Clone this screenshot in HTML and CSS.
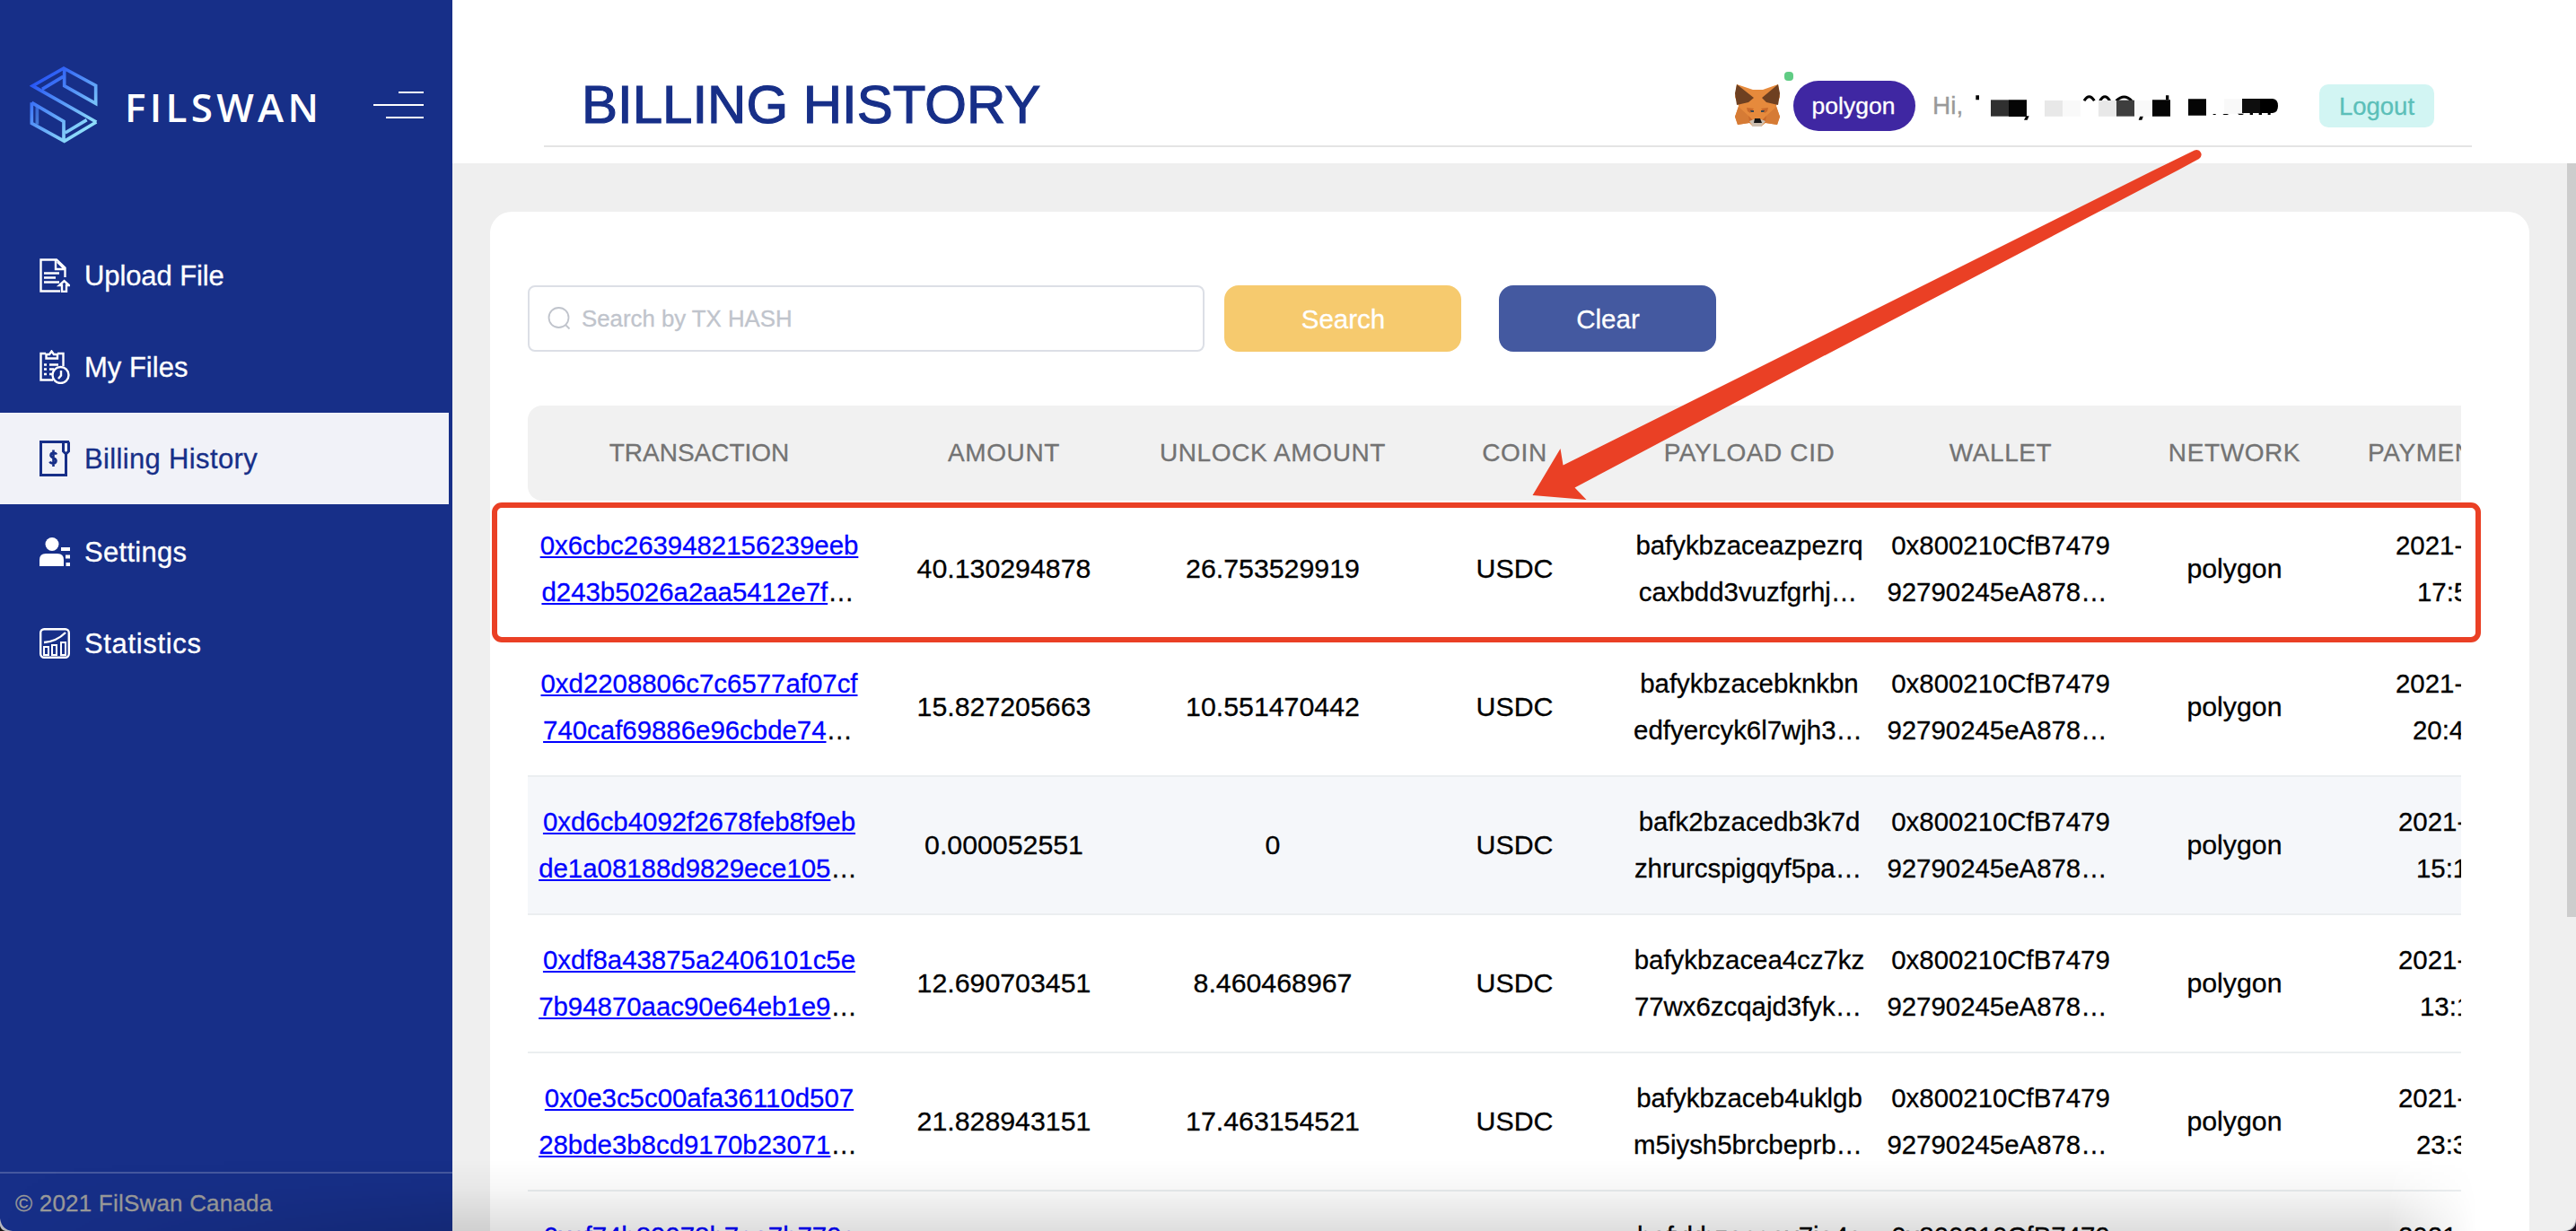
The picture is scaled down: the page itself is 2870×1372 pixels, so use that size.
FILE: index.html
```html
<!DOCTYPE html>
<html lang="en">
<head>
<meta charset="utf-8">
<title>FilSwan - Billing History</title>
<link rel="stylesheet" href="styles.css">
</head>
<body>
<div class="app">
  <aside class="sidebar">
    <div class="brand">
      <svg class="brand-mark" viewBox="99 99 231 261" width="77" height="87" fill="none">
        <defs>
          <linearGradient id="swan" gradientUnits="userSpaceOnUse" x1="130" y1="130" x2="290" y2="330">
            <stop offset="0" stop-color="#2350f5"/><stop offset=".5" stop-color="#5a9bf8"/><stop offset="1" stop-color="#96e6fb"/>
          </linearGradient>
        </defs>
        <g stroke="url(#swan)" stroke-width="11">
          <path d="M322 288 109 167 213 108 320 166V226L215 167V112M141 178 211 136"/>
          <path d="M106 223V292L215 352 322 288M106 223 213 286V350M218 324 290 281"/>
          <path d="M124 236V296" opacity=".7"/>
        </g>
      </svg>
      <span class="brand-name">FILSWAN</span>
      <span class="menu-toggle"><i></i><i></i><i></i></span>
    </div>
    <nav class="menu">
      <a class="menu-item upload">
        <svg width="34" height="38" viewBox="0 0 34 38" fill="none" stroke="#fff" stroke-width="2.400">
          <path d="M28.500 21V10.500L19 1.500H1.500V36.500H23"/><path d="M18 2V12H28M20 4 27 11"/>
          <path d="M5 16.500H22M5 21.500H18M5 26.500H22"/><path d="M25 37V30H22L27.500 25 33 30H30V37Z"/>
        </svg><span>Upload File</span>
      </a>
      <a class="menu-item">
        <svg width="34" height="38" viewBox="0 0 34 38" fill="none" stroke="#fff" stroke-width="2.400">
          <path d="M7 4H1.500V33.500H15M20 4H26.500V18"/><path d="M7.500 9.500V5H11L13.500 1.500 16 5H20V9.500Z"/>
          <path d="M5 16.500H8M11 16.500H21M5 21.500H8M11 21.500H16M5 27H8M11 27H14"/><circle cx="23.500" cy="28" r="9"/><path d="M24 23V28.500L21 32"/>
        </svg><span>My Files</span>
      </a>
      <a class="menu-item active">
        <svg width="34" height="40" viewBox="0 0 34 40" fill="none" stroke="#172f88" stroke-width="3">
          <path d="M33 1.500H1.500V38.500H29.500V14"/><path d="M26.500 2V12L29.500 15 32.500 12V1.500"/>
          <path stroke-width="2.600" d="M19 15.500C18 13.300 12.500 13 12.500 16.500 12.500 20 18.500 19 18.500 22.500 18.500 26.500 12.500 26 11.500 23.500M15.500 10.500V29"/>
        </svg><span>Billing History</span>
      </a>
      <a class="menu-item after-active">
        <svg width="34" height="32" viewBox="0 0 34 32" fill="#fff">
          <circle cx="14" cy="7.500" r="7.500"/><path d="M0 32V25Q0 18 7 18H20Q27 18 27 25V32ZM24 11H34V15H24ZM29 19.500H34V23.500H29ZM29.500 28H34V32H29.500Z"/>
        </svg><span>Settings</span>
      </a>
      <a class="menu-item stats">
        <svg width="34" height="34" viewBox="0 0 34 34" fill="none" stroke="#fff" stroke-width="2.400">
          <rect x="1.200" y="1.200" width="31.600" height="31.600" rx="4"/><path d="M5 16Q19 15 29 5"/>
          <path stroke-width="2" d="M5 30V21H10V30ZM14 30V19H19V30ZM24 30V16H29V30Z"/>
        </svg><span>Statistics</span>
      </a>
    </nav>
    <footer class="copyright">© 2021 FilSwan Canada</footer>
  </aside>

  <div class="main">
    <header class="topbar">
      <div class="topbar-inner">
        <h1>BILLING HISTORY</h1>
        <div class="account">
          <div class="wallet">
            <svg width="50" height="48" viewBox="0 0 50 48">
              <path fill="#e68a3c" d="M2 0 20 6H31L48 0 50 14 46 24 50 36 47 45 34 43 29 47H20L16 43 3 45 0 36 4 24 0 14Z"/>
              <path fill="#6e4021" d="M2 0 21 15 15 20 2 23 0 10ZM48 0 30 15 35 20 48 23 50 10Z"/>
              <path fill="#d67b35" d="M0 36 4 25 15 35 16 43 3 45ZM50 36 46 25 35 35 34 43 47 45Z"/>
              <path fill="#c8692b" d="M13 26 21 27 17 32 14 30ZM37 26 29 27 33 32 36 30ZM15 35 20 40 16 43ZM35 35 30 40 34 43Z"/>
              <path fill="#cdbfb0" d="M16 41 21 39H29L34 41 29 47H20Z"/>
              <path fill="#161616" d="M22 38H28L30 43H21Z"/><path fill="#3a4650" d="M17 29H21V31H18ZM29 29H33L32 31H29Z"/>
            </svg>
            <i class="online"></i>
          </div>
          <span class="chain">polygon</span>
          <span class="greeting">Hi,</span>
          <svg class="masked" width="340" height="40" viewBox="60 60 1020 120">
            <g fill="none" stroke="#000" stroke-width="9"><path d="M426 97Q443 69 460 97M479 97Q495 69 512 97M533 97Q560 71 585 97"/></g>
            <path d="M64 79H75V94H64ZM699 79H709V94H699ZM232 148H242L236 161H225ZM613 148H624L619 161H608Z"/>
            <g><path fill="#303030" d="M114 94H174V149H114Z"/><path fill="#050505" d="M174 94H234V150H174ZM654 94H714V149H654ZM774 91H834V146H774Z"/>
            <path fill="#e8e8e8" d="M294 96H354V149H294ZM474 96H534V149H474Z"/><path fill="#f9f9f9" d="M354 96H414V149H354ZM594 96H654V149H594ZM894 91H954V140H894Z"/>
            <path fill="#3e3e3e" d="M534 95H594V149H534Z"/><path fill="#0e0e0e" d="M954 90H1014V138H954Z"/><path d="M1014 90H1056Q1074 92 1074 114T1056 138H1014Z"/>
            <path d="M857 141H866V144H857ZM889 141H910L904 144H893ZM939 140H961L955 144H944ZM980 138H990V144H980ZM1010 138H1020V144H1010ZM1040 138H1049V144H1040Z"/></g>
          </svg>
          <button class="logout">Logout</button>
        </div>
      </div>
    </header>

    <section class="card">
      <div class="filters">
        <label class="search-box">
          <svg width="26" height="26" viewBox="0 0 26 26" fill="none" stroke="#c0c4cc" stroke-width="1.800"><circle cx="12.500" cy="12" r="11"/><path d="M20 20 24.500 24.500"/></svg>
          <span>Search by TX HASH</span>
        </label>
        <button class="btn btn-search">Search</button>
        <button class="btn btn-clear">Clear</button>
      </div>
      <div class="table-wrap">
        <table>
          <colgroup><col class="c-tx"><col class="c-amount"><col class="c-unlock"><col class="c-coin"><col class="c-cid"><col class="c-wallet"><col class="c-network"><col class="c-date"></colgroup>
          <thead>
            <tr><th>TRANSACTION</th><th>AMOUNT</th><th>UNLOCK AMOUNT</th><th>COIN</th><th>PAYLOAD CID</th><th>WALLET</th><th>NETWORK</th><th class="date-head">PAYMEN</th></tr>
          </thead>
          <tbody>
            <tr>
              <td><a>0x6cbc2639482156239eeb</a><br><a>d243b5026a2aa5412e7f</a><span class="more">…</span></td><td class="num">40.130294878</td><td class="num">26.753529919</td><td class="num">USDC</td>
              <td>bafykbzaceazpezrq<br>caxbdd3vuzfgrhj<span class="more">…</span></td><td class="addr">0x800210CfB7479<br>92790245eA878<span class="more">…</span></td><td class="num">polygon</td>
              <td class="date early"><div>2021-</div><div class="time">17:5</div></td>
            </tr>
            <tr>
              <td><a>0xd2208806c7c6577af07cf</a><br><a>740caf69886e96cbde74</a><span class="more">…</span></td><td class="num">15.827205663</td><td class="num">10.551470442</td><td class="num">USDC</td>
              <td>bafykbzacebknkbn<br>edfyercyk6l7wjh3<span class="more">…</span></td><td class="addr">0x800210CfB7479<br>92790245eA878<span class="more">…</span></td><td class="num">polygon</td>
              <td class="date early"><div>2021-</div><div class="time wide">20:4</div></td>
            </tr>
            <tr class="hover">
              <td><a>0xd6cb4092f2678feb8f9eb</a><br><a>de1a08188d9829ece105</a><span class="more">…</span></td><td class="num">0.000052551</td><td class="num">0</td><td class="num">USDC</td>
              <td>bafk2bzacedb3k7d<br>zhrurcspigqyf5pa<span class="more">…</span></td><td class="addr">0x800210CfB7479<br>92790245eA878<span class="more">…</span></td><td class="num">polygon</td>
              <td class="date"><div>2021-</div><div class="time">15:1</div></td>
            </tr>
            <tr>
              <td><a>0xdf8a43875a2406101c5e</a><br><a>7b94870aac90e64eb1e9</a><span class="more">…</span></td><td class="num">12.690703451</td><td class="num">8.460468967</td><td class="num">USDC</td>
              <td>bafykbzacea4cz7kz<br>77wx6zcqajd3fyk<span class="more">…</span></td><td class="addr">0x800210CfB7479<br>92790245eA878<span class="more">…</span></td><td class="num">polygon</td>
              <td class="date"><div>2021-</div><div class="time narrow">13:1</div></td>
            </tr>
            <tr>
              <td><a>0x0e3c5c00afa36110d507</a><br><a>28bde3b8cd9170b23071</a><span class="more">…</span></td><td class="num">21.828943151</td><td class="num">17.463154521</td><td class="num">USDC</td>
              <td>bafykbzaceb4uklgb<br>m5iysh5brcbeprb<span class="more">…</span></td><td class="addr">0x800210CfB7479<br>92790245eA878<span class="more">…</span></td><td class="num">polygon</td>
              <td class="date"><div>2021-</div><div class="time">23:3</div></td>
            </tr>
            <tr>
              <td><a>0xcf74b89978b7ea7b779c</a><br>&nbsp;</td><td></td><td></td><td></td>
              <td>bafykbzaceav7ja4s<br>&nbsp;</td><td>0x800210CfB7479<br>&nbsp;</td><td></td>
              <td class="date"><div>2021-</div><div>&nbsp;</div></td>
            </tr>
          </tbody>
        </table>
      </div>
    </section>
  </div>

  <i class="scrollbar"></i>
  <i class="bottom-shade"></i>
  <i class="row-marker"></i>
  <svg class="arrow" viewBox="1700 160 760 400" width="760" height="400">
    <path fill="#ea4025" d="M1707.500 552 1738.500 500 1741.500 518.500 1939 420 2399 190 2445 167.500Q2450 166 2452 170T2450 177L2426 190 1987.500 420 1754.500 543.500 1767.500 557Z"/>
  </svg>
  <svg class="corner corner-left" width="14" height="14" viewBox="0 0 14 14"><path fill="#b9b9c0" d="M0 0V14H14Q2 13 0 0Z"/><path fill="#111" d="M0 8V14H6Q1 13 0 8Z"/></svg>
  <svg class="corner corner-right" width="14" height="14" viewBox="0 0 14 14"><path fill="#b9b9c0" d="M14 0V14H0Q12 13 14 0Z"/><path fill="#1a0d20" d="M14 4V14H4Q13 12 14 4Z"/></svg>
</div>
</body>
</html>
```
FILE: styles.css
```css
* { box-sizing: border-box; }
body { margin: 0; font-family: "Liberation Sans", Arial, sans-serif; color: #000; -webkit-text-stroke-width: .3px; }
button { font: inherit; border: 0; padding: 0; }
svg { display: block; flex: none; }

.app { position: relative; display: flex; width: 2870px; height: 1372px; overflow: hidden; background: #efefef; }

/* Sidebar */
.sidebar { display: flex; flex-direction: column; flex: none; width: 504px; background: #172f88; }
.brand { display: flex; align-items: center; height: 256px; padding: 0 32px 22px 33px; }
.brand-mark { margin-top: -1px; }
.brand-name { margin: 4px 0 0 29px; font: 600 44px/60px "Open Sans", sans-serif; letter-spacing: 4.3px; color: #fff; -webkit-text-stroke-width: 0; }
.menu-toggle { display: flex; flex-direction: column; align-items: flex-end; gap: 12px; margin-left: auto; }
.menu-toggle i { width: 56px; height: 2px; background: #fff; }
.menu-toggle i:first-child { width: 28px; }
.menu-toggle i:last-child { width: 42px; }
.menu-item { display: flex; align-items: center; gap: 16px; width: 500px; height: 102px; padding-left: 44px; font-size: 31px; color: #fff; }
.menu-item span { padding-top: 2px; }
.menu-item.upload { letter-spacing: -.1px; }
.menu-item.active { background: #f1f2f8; color: #172f88; letter-spacing: .35px; }
.menu-item.after-active { margin-top: 2px; letter-spacing: .3px; }
.menu-item.stats { letter-spacing: .65px; }
.copyright { height: 66px; margin-top: auto; padding-left: 17px; border-top: 2px solid #45589f; font-size: 26px; line-height: 66px; letter-spacing: .2px; color: #9a9a9a; }

/* Header */
.main { flex: 1; min-width: 0; }
.topbar { height: 182px; padding-left: 102px; background: #fff; }
.topbar-inner { display: flex; align-items: center; width: 2148px; height: 164px; padding: 72px 42px 0; border-bottom: 2px solid #e4e4e4; }
h1 { margin: -2px 0 0; font-size: 60px; font-weight: 400; color: #172f88; white-space: nowrap; -webkit-text-stroke-width: 1.2px; }
.account { display: flex; align-items: center; margin: 2px 0 0 auto; font-size: 28px; }
.wallet { position: relative; width: 50px; margin-right: 15px; }
.online { position: absolute; left: 55px; top: -14px; width: 10px; height: 10px; border-radius: 4px; background: #60cc84; }
.chain { width: 136px; height: 56px; padding-right: 2px; border-radius: 28px; background: #3f27a2; color: #fff; font-size: 26.500px; line-height: 57px; text-align: center; }
.greeting { width: 47px; margin-left: 19px; color: #999; }
.masked { margin: 4px 44px 0 0; }
.logout { width: 128px; height: 48px; padding-top: 1px; border-radius: 10px; background: #d2f5f3; color: #5bbfb9; font-size: 27.500px; }

/* Content card */
.card { width: 2272px; height: 1160px; margin: 54px 0 0 42px; padding: 82px 42px 0; border-radius: 24px; background: #fff; }
.filters { display: flex; }
.search-box { display: flex; align-items: center; gap: 12px; width: 754px; height: 74px; padding-left: 20px; border: 2px solid #dcdfe6; border-radius: 8px; font-size: 25.800px; color: #c0c4cc; }
.btn { height: 74px; padding: 1px 0 0 1px; border-radius: 16px; color: #fff; font-size: 29.500px; }
.btn-search { width: 264px; margin-left: 22px; background: #f6ca6e; }
.btn-clear { width: 242px; margin-left: 42px; background: #4459a0; }

/* Table */
.table-wrap { width: 2154px; margin-top: 60px; overflow: hidden; }
table { width: 2275px; table-layout: fixed; border-collapse: separate; border-spacing: 0; }
.c-tx { width: 382px; } .c-amount { width: 297px; } .c-unlock { width: 302px; } .c-coin { width: 237px; }
.c-cid { width: 286px; } .c-wallet { width: 274px; } .c-network { width: 247px; } .c-date { width: 250px; }
th { height: 106px; padding: 0; background: #f1f1f1; color: #737373; font-size: 28px; font-weight: 400; letter-spacing: .6px; }
th:first-child { border-radius: 16px 0 0 16px; letter-spacing: 0; }
td { height: 154px; padding: 24px 0; border-bottom: 2px solid #ebeef0; font-size: 29.4px; line-height: 52px; text-align: center; white-space: nowrap; }
td.num { font-size: 30.3px; }
td a { color: #00f; text-decoration: underline; text-decoration-thickness: 2px; text-underline-offset: 2px; text-decoration-skip-ink: none; }
.more { padding-right: 3px; }
.addr .more { padding-right: 8px; }
.hover td { background: #f5f7fa; }
.date-head { padding-left: 25px; text-align: left; }
td.date { padding-left: 59px; text-align: left; }
td.early { padding-left: 56px; }
.time { padding-left: 20px; }
.early .time { padding-left: 24px; }
.early .wide { padding-left: 19px; }
.time.narrow { padding-left: 24px; }

/* Overlays */
.scrollbar { position: absolute; left: 2860px; top: 182px; width: 10px; height: 840px; background: #cdcdcd; }
.bottom-shade { position: absolute; left: 0; bottom: 0; width: 2760px; height: 80px; background: linear-gradient(rgba(0,0,0,0), rgba(0,0,0,.03) 40%, rgba(0,0,0,.13)); -webkit-mask-image: linear-gradient(90deg, transparent, #000 500px 2660px, transparent); mask-image: linear-gradient(90deg, transparent, #000 500px 2660px, transparent); }
.row-marker { position: absolute; left: 548px; top: 560px; width: 2216px; height: 156px; border: 6px solid #ea4025; border-radius: 11px; }
.arrow { position: absolute; left: 1700px; top: 160px; }
.corner { position: absolute; bottom: 0; }
.corner-left { left: 0; }
.corner-right { right: 0; }
```
